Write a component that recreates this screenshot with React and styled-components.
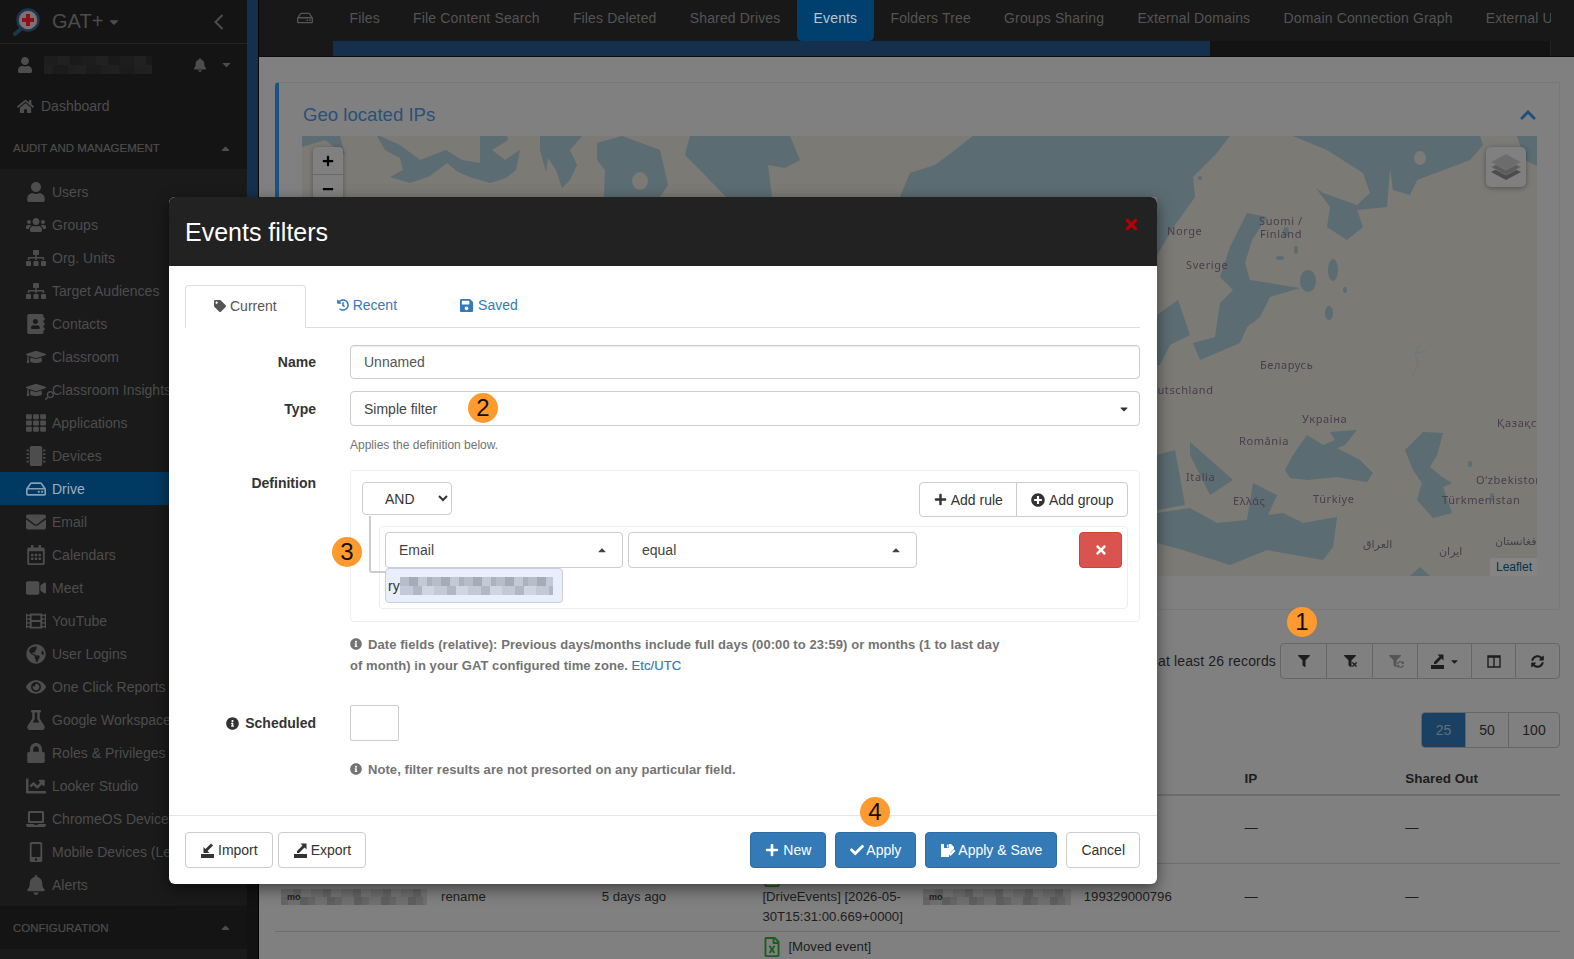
import React from "react";
import styled, { createGlobalStyle } from "styled-components";
import {
  FaUser, FaUsers, FaSitemap, FaAddressBook, FaGraduationCap, FaTh, FaMicrochip, FaRegHdd,
  FaEnvelope, FaRegCalendarAlt, FaVideo, FaFilm, FaGlobeAmericas, FaEye, FaFlask, FaLock,
  FaChartLine, FaLaptop, FaMobileAlt, FaBell, FaHome, FaCaretDown, FaCaretUp, FaChevronUp,
  FaTag, FaHistory, FaSave, FaPlus, FaPlusCircle, FaTimes, FaCheck, FaFilter, FaSyncAlt,
  FaInfoCircle, FaRegFileExcel, FaSearch, FaMinus,
} from "react-icons/fa";

const GlobalStyle = createGlobalStyle`
  html, body { margin: 0; padding: 0; height: 100%; overflow: hidden; }
  body { font-family: "Liberation Sans", Arial, sans-serif; font-size: 14px; color: #1d1d1d; background: #808080; }
  * { box-sizing: border-box; }
`;

const Page = styled.div`
  position: relative;
  display: flex;
  width: 1574px;
  height: 959px;
  overflow: hidden;
`;

/* sidebar */
const Sidebar = styled.aside`
  width: 247px;
  flex: none;
  background: #141414;
  color: #4d4d4d;
  overflow: hidden;
`;

const Brand = styled.div`
  display: flex;
  align-items: center;
  height: 44px;
  padding: 0 23px 0 13px;
  border-bottom: 1px solid #232323;
`;

const BrandName = styled.span`
  margin-left: 12px;
  font-size: 20px;
  color: #4c4c4c;
`;

const BrandCaret = styled(FaCaretDown)`
  margin-left: 4px;
  font-size: 14px;
`;

const BackArrow = styled.svg`
  margin-left: auto;
`;

const UserRow = styled.div`
  display: flex;
  align-items: center;
  height: 41px;
  padding: 0 14px 0 17px;
  font-size: 16px;
`;

const UserName = styled.div`
  width: 108px;
  height: 18px;
  margin-left: 11px;
  background:
    repeating-linear-gradient(90deg, #1d1d1d 0 14px, #212121 14px 26px, #1a1a1a 26px 38px) top / 100% 50% no-repeat,
    repeating-linear-gradient(90deg, #202020 0 9px, #1b1b1b 9px 24px, #1f1f1f 24px 33px) bottom / 100% 50% no-repeat;
`;

const UserBell = styled(FaBell)`
  margin-left: auto;
  font-size: 14px;
`;

const UserCaret = styled(FaCaretDown)`
  margin-left: 13px;
  font-size: 13px;
`;

const DashLink = styled.div`
  display: flex;
  align-items: center;
  height: 42px;
  padding-left: 17px;
  gap: 7px;
  font-size: 14px;
`;

const SectionHead = styled.div`
  display: flex;
  align-items: center;
  justify-content: space-between;
  height: ${(p) => p.$h}px;
  padding: 0 15px 0 13px;
  font-size: 11.5px;
  font-weight: 400;
  -webkit-text-stroke: 0.2px #4d4d4d;
`;

const NavList = styled.div`
  background: #1a1a1a;
  padding: 6px 0 5px;
`;

const NavItem = styled.div`
  display: flex;
  align-items: center;
  height: 33px;
  white-space: nowrap;
  background: ${(p) => (p.$active ? "#003a63" : "transparent")};
  color: ${(p) => (p.$active ? "#9db0bf" : "#4d4d4d")};
`;

const NavIcon = styled.span`
  position: relative;
  width: 52px;
  flex: none;
  display: flex;
  justify-content: center;
  padding-left: 20px;
  font-size: 20px;
  color: ${(p) => (p.$active ? "#84a0b3" : "#4d4d4d")};
`;

const MiniSearch = styled(FaSearch)`
  position: absolute;
  right: -2px;
  bottom: 0;
  font-size: 9px;
  transform: scaleX(-1);
`;

const SidebarEnd = styled.div`
  height: 12px;
  background: #1a1a1a;
`;

const VScroll = styled.div`
  width: 11px;
  flex: none;
  background: #121212;
`;

const VThumb = styled.div`
  height: 640px;
  background: #14304d;
`;

/* main column */
const Main = styled.main`
  flex: 1;
  min-width: 0;
  border-left: 1px solid #000;
  background: #808080;
`;

const TopBar = styled.div`
  height: 57px;
  background: #181818;
  border-bottom: 1px solid #0c0c0c;
`;

const TabStrip = styled.div`
  display: flex;
  align-items: stretch;
  width: 1292px;
  height: 41px;
  padding-left: 38px;
  overflow: hidden;
  white-space: nowrap;
  color: #545454;
`;

const TabIcon = styled.span`
  display: flex;
  align-items: center;
  flex: none;
  width: 36px;
  font-size: 16px;
  padding-bottom: 6px;
`;

const TopTab = styled.div`
  padding: 10px 16.6px 0;
  letter-spacing: 0.15px;
  border-radius: 0 0 5px 5px;
  background: ${(p) => (p.$active ? "#00406e" : "transparent")};
  color: ${(p) => (p.$active ? "#b9c6d0" : "#545454")};
`;

const HScroll = styled.div`
  width: 1218px;
  height: 15px;
  margin-left: 74px;
  background: #131313;
  border: 1px solid #222;
  border-width: 0 1px 0 0;
`;

const HThumb = styled.div`
  width: 877px;
  height: 100%;
  background: #14304d;
`;

const Content = styled.div`
  padding: 25px 14px 0 16px;
`;

const Panel = styled.section`
  height: 528px;
  border: 1px solid #787878;
  border-left: 4px solid #1f5284;
  border-radius: 4px 0 0 4px;
  padding: 0 23px 0 23px;
`;

const PanelHead = styled.div`
  display: flex;
  align-items: center;
  justify-content: space-between;
  height: 53px;
  padding: 10px 0 0 1px;
  font-size: 18.6px;
  color: #2a5078;
`;

const PanelChevron = styled(FaChevronUp)`
  font-size: 18px;
  margin-right: -1px;
  color: #1c4f80;
`;

const MapBox = styled.div`
  position: relative;
  width: 1235px;
  height: 440px;
  overflow: hidden;
  background: #7b7a75;
`;

const MapArt = styled.svg`
  display: block;
  filter: blur(0.4px);
`;

const ZoomBar = styled.div`
  position: absolute;
  left: 11px;
  top: 11px;
  width: 30px;
  background: #808080;
  border-radius: 4px;
  box-shadow: 0 1px 5px rgba(0, 0, 0, 0.3);
`;

const ZoomBtn = styled.div`
  height: 28px;
  display: flex;
  align-items: center;
  justify-content: center;
  color: #000;
  font-size: 12px;
  border-bottom: 1px solid #6a6a6a;
`;

const LayerBtn = styled.div`
  position: absolute;
  right: 11px;
  top: 11px;
  width: 40px;
  height: 40px;
  background: #808080;
  border-radius: 5px;
  box-shadow: 0 1px 5px rgba(0, 0, 0, 0.35);
  display: flex;
  align-items: center;
  justify-content: center;
`;

const Attribution = styled.div`
  position: absolute;
  right: 0;
  bottom: 0;
  width: 47px;
  height: 18px;
  padding: 2px 0 0 6px;
  background: #858483;
  color: #00344f;
  font-size: 12px;
`;

const ToolRow = styled.div`
  display: flex;
  justify-content: flex-end;
  align-items: center;
  gap: 4px;
  margin-top: 33px;
  letter-spacing: 0.15px;
`;

const BtnGroup = styled.div`
  display: flex;
  height: ${(p) => p.$h}px;
  border: 1px solid #666;
  border-radius: 4px;
  overflow: hidden;
`;

const GroupBtn = styled.div`
  position: relative;
  display: flex;
  align-items: center;
  justify-content: center;
  width: ${(p) => p.$w}px;
  gap: 4px;
  border-left: ${(p) => (p.$first ? "0" : "1px solid #666")};
  background: ${(p) => (p.$on ? "#1a4063" : "transparent")};
  color: ${(p) => p.$c || "#1d1d1d"};
  font-size: ${(p) => p.$fs || 14}px;
`;

const SubMark = styled.span`
  position: absolute;
  left: 24px;
  bottom: 10px;
  font-size: 7px;
  display: flex;
`;

const PagerRow = styled.div`
  display: flex;
  justify-content: flex-end;
  margin-top: 33px;
`;

const TableHead = styled.div`
  display: grid;
  grid-template-columns: 154px repeat(6, 160.7px) 1fr;
  padding-left: 12px;
  height: 48px;
  padding-top: 23px;
  border-bottom: 2px solid #6e6e6e;
  font-weight: 700;
  font-size: 13.5px;
`;

const TableRow = styled.div`
  display: grid;
  grid-template-columns: 154px repeat(6, 160.7px) 1fr;
  align-items: center;
  padding: 0 0 ${(p) => p.$pb || 0}px 12px;
  height: ${(p) => p.$h}px;
  border-bottom: 1px solid #6e6e6e;
  font-size: 13.2px;
  line-height: 20px;
`;

const Cell = styled.div`
  min-width: 0;
  white-space: nowrap;
`;

const EventLine = styled.div`
  display: flex;
  align-items: center;
  gap: 6px;
  margin-top: ${(p) => p.$mt || 0}px;
`;

const ExcelIcon = styled(FaRegFileExcel)`
  color: #1c5c1c;
  font-size: 20px;
`;

const OwnerChip = styled.div`
  display: flex;
  align-items: center;
  width: ${(p) => p.$w}px;
  height: 16px;
  margin-left: ${(p) => p.$ml || 0}px;
  padding-left: 6px;
  font-size: 9px;
  font-weight: 700;
  background:
    repeating-linear-gradient(90deg, #6d6d6d 0 12px, #646464 12px 20px, #747474 20px 30px) top / 100% 50% no-repeat,
    repeating-linear-gradient(90deg, #666 0 7px, #707070 7px 19px, #5f5f5f 19px 27px) bottom / 100% 50% no-repeat;
`;

/* modal */
const Modal = styled.div`
  position: absolute;
  left: 169px;
  top: 197px;
  width: 988px;
  height: 687px;
  background: #fff;
  border-radius: 6px;
  box-shadow: 0 5px 15px rgba(0, 0, 0, 0.5);
  color: #333;
`;

const ModalHead = styled.div`
  display: flex;
  align-items: center;
  justify-content: space-between;
  height: 69px;
  padding: 2px 17px 0 16px;
  background: #222;
  border-radius: 6px 6px 0 0;
  color: #fff;
  font-size: 25px;
`;

const CloseIcon = styled(FaTimes)`
  color: #b90000;
  font-size: 17px;
  margin: -16px 0 0;
`;

const ModalBody = styled.div`
  height: 550px;
  padding: 19px 17px 0 16px;
  border-bottom: 1px solid #e5e5e5;
`;

const Tabs = styled.div`
  display: flex;
  height: 43px;
  border-bottom: 1px solid #ddd;
`;

const Tab = styled.div`
  display: flex;
  align-items: center;
  gap: 4px;
  height: ${(p) => (p.$on ? 43 : 42)}px;
  padding: 0 ${(p) => (p.$on ? 28 : 30)}px 2px;
  color: ${(p) => (p.$on ? "#555" : "#337ab7")};
  background: ${(p) => (p.$on ? "#fff" : "transparent")};
  border: 1px solid ${(p) => (p.$on ? "#ddd" : "transparent")};
  border-bottom-color: ${(p) => (p.$on ? "#fff" : "transparent")};
  border-radius: 4px 4px 0 0;
`;

const FormRow = styled.div`
  display: grid;
  grid-template-columns: 131px 790px;
  column-gap: 34px;
  align-items: ${(p) => (p.$top ? "start" : "center")};
  margin-top: ${(p) => p.$mt}px;
`;

const Label = styled.label`
  display: flex;
  align-items: center;
  justify-content: flex-end;
  gap: 6px;
  font-weight: 700;
  padding-top: ${(p) => p.$pt || 0}px;
`;

const TextInput = styled.input`
  width: 100%;
  height: 34px;
  padding: 0 13px;
  font: inherit;
  color: #555;
  border: 1px solid #ccc;
  border-radius: 4px;
  box-shadow: inset 0 1px 1px rgba(0, 0, 0, 0.075);
  outline: none;
`;

const SelectBox = styled.div`
  display: flex;
  align-items: center;
  justify-content: space-between;
  width: ${(p) => p.$w || "100%"};
  height: ${(p) => p.$h || 35}px;
  padding: 0 14px 0 13px;
  border: 1px solid #ccc;
  border-radius: 4px;
  color: #444;
`;

const Caret = styled(FaCaretUp)`
  font-size: 12px;
  color: #444;
`;

const CaretDown = styled(FaCaretDown)`
  font-size: 12px;
  color: #333;
  margin-right: -5px;
`;

const Help = styled.div`
  margin: 12px 0 0 165px;
  font-size: 12px;
  line-height: 14px;
  color: #737373;
`;

const QueryBox = styled.div`
  width: 790px;
  height: 152px;
  padding: 11px 11px 0;
  border: 1px solid #eee;
  border-radius: 4px;
`;

const QueryHead = styled.div`
  display: flex;
  align-items: flex-start;
  justify-content: space-between;
  height: 44px;
`;

const AndSelect = styled.select`
  width: 90px;
  height: 33px;
  padding-left: 18px;
  font: inherit;
  color: #333;
  background: #fff;
  border: 1px solid #ccc;
  border-radius: 4px;
`;

const ButtonPair = styled.div`
  display: flex;
`;

const OutlineBtn = styled.div`
  display: flex;
  align-items: center;
  justify-content: center;
  gap: 4px;
  height: 35px;
  padding: 0 13.5px;
  color: #333;
  background: #fff;
  border: 1px solid #ccc;
  border-radius: ${(p) => p.$r || "4px"};
  margin-left: ${(p) => p.$ml || 0}px;
`;

const Rule = styled.div`
  position: relative;
  margin-left: 17px;
  height: 83px;
  padding: 5px 5px 0 5px;
  border: 1px solid #eee;
  border-radius: 4px;
  &::before {
    content: "";
    position: absolute;
    left: -11px;
    top: -11px;
    width: 17px;
    height: 55px;
    border-left: 2px solid #ccc;
    border-bottom: 2px solid #ccc;
    border-radius: 0 0 0 3px;
  }
`;

const RuleTop = styled.div`
  display: flex;
  gap: 5px;
`;

const DangerBtn = styled.div`
  display: flex;
  align-items: center;
  justify-content: center;
  width: 43px;
  height: 36px;
  margin-left: auto;
  background: #d9534f;
  border: 1px solid #d43f3a;
  border-radius: 4px;
  color: #fff;
  font-size: 14px;
`;

const Token = styled.div`
  position: relative;
  z-index: 1;
  display: flex;
  align-items: center;
  width: 178px;
  height: 35px;
  padding-left: 2px;
  background: #e8eefb;
  border: 1px solid #c9ced8;
  border-radius: 4px;
`;

const Blur = styled.div`
  width: 153px;
  height: 18px;
  background:
    repeating-linear-gradient(90deg, #b8bdca 0 9px, #a6abb8 9px 18px, #c4c9d6 18px 27px, #adb2bf 27px 32px) top / 100% 50% no-repeat,
    repeating-linear-gradient(90deg, #c4c9d6 0 13px, #b2b7c4 13px 22px, #d0d5e2 22px 34px) bottom / 100% 50% no-repeat;
`;

const Note = styled.div`
  display: flex;
  gap: 6px;
  margin: ${(p) => p.$mt}px 0 0 165px;
  width: 680px;
  font-size: 13px;
  font-weight: 700;
  letter-spacing: 0.07px;
  line-height: 21px;
  color: #737373;
  a { color: #337ab7; font-weight: 400; -webkit-text-stroke: 0.2px #337ab7; }
  svg { flex: none; margin-top: 4px; font-size: 12px; }
`;

const Check = styled.div`
  width: 49px;
  height: 36px;
  border: 1px solid #ccc;
  border-radius: 2px;
`;

const ModalFoot = styled.div`
  display: flex;
  justify-content: space-between;
  padding: 16px 17px 0 16px;
`;

const FootGroup = styled.div`
  display: flex;
  gap: ${(p) => p.$gap}px;
`;

const FootBtn = styled.div`
  display: flex;
  align-items: center;
  justify-content: center;
  gap: ${(p) => p.$gap ?? 3}px;
  height: 36px;
  padding: 0 14px;
  background: ${(p) => (p.$blue ? "#337ab7" : "#fff")};
  color: ${(p) => (p.$blue ? "#fff" : "#333")};
  border: 1px solid ${(p) => (p.$blue ? "#2e6da4" : "#ccc")};
  border-radius: 4px;
`;

const Badge = styled.div`
  position: absolute;
  left: ${(p) => p.$x - 15}px;
  top: ${(p) => p.$y - 15}px;
  z-index: 5;
  width: 30px;
  height: 30px;
  display: flex;
  align-items: center;
  justify-content: center;
  border-radius: 50%;
  background: #ff9a2e;
  color: #111;
  font-size: 24px;
`;

const navItems = [
  [FaUser, "Users"], [FaUsers, "Groups"], [FaSitemap, "Org. Units"], [FaSitemap, "Target Audiences"],
  [FaAddressBook, "Contacts"], [FaGraduationCap, "Classroom"], [FaGraduationCap, "Classroom Insights", true],
  [FaTh, "Applications"], [FaMicrochip, "Devices"], [FaRegHdd, "Drive"], [FaEnvelope, "Email"],
  [FaRegCalendarAlt, "Calendars"], [FaVideo, "Meet"], [FaFilm, "YouTube"], [FaGlobeAmericas, "User Logins"],
  [FaEye, "One Click Reports"], [FaFlask, "Google Workspace Status"], [FaLock, "Roles & Privileges"],
  [FaChartLine, "Looker Studio"], [FaLaptop, "ChromeOS Devices"], [FaMobileAlt, "Mobile Devices (Legacy)"],
  [FaBell, "Alerts"],
];

const topTabs = [
  "Files", "File Content Search", "Files Deleted", "Shared Drives", "Events", "Folders Tree",
  "Groups Sharing", "External Domains", "Domain Connection Graph", "External Users",
];

const water = [
  "M302 136H377L385 150L400 158L403 170L390 177L410 183L430 176L447 163L458 172L470 177L490 183L506 178L516 170L520 150L505 160L492 150L508 140L507 136H480L480 163L462 160L446 150L420 160L400 145L380 136Z",
  "M302 136H340L345 155L325 140L302 147Z",
  "M540 136H582L570 150L577 165L570 180L562 188L556 170L548 158L546 172L540 150Z",
  "M597 143L622 136L660 150L668 185L660 197H604L605 170L597 160Z",
  "M690 136H770L775 150L768 165L772 197H726L700 170L685 155Z",
  "M770 136L790 136L800 160L785 168L768 165Z",
  "M973 136H1230L1215 155L1193 177L1195 197H900L910 173L935 165L955 150Z",
  "M1157 197H1195L1175 225L1160 250L1157 255Z",
  "M1157 315L1178 300L1190 335L1170 345L1160 365L1157 365Z",
  "M1247 213L1267 217L1252 240L1245 263L1250 280L1300 288L1270 297L1260 317L1247 327L1240 343L1200 360L1193 343L1215 337L1220 303L1233 290L1220 277L1230 247Z",
  "M1293 136L1327 150L1363 173L1370 193L1357 205L1323 193L1316 188L1330 207L1327 227L1347 240L1363 227L1357 210L1387 207L1390 168L1393 190L1410 195L1417 180L1470 160L1483 145L1480 136Z",
  "M1517 136H1537V166L1525 160Z",
  "M1285 470L1293 455L1307 435L1323 445L1335 440L1330 432L1357 430L1345 445L1337 448L1360 460L1373 473L1367 482L1337 477L1307 480L1290 478Z",
  "M1405 450L1423 432L1443 433L1437 455L1430 467L1442 477L1452 483L1443 487L1452 513L1433 518L1417 500L1422 483L1413 470Z",
  "M1157 513L1190 508L1217 523L1247 520L1253 483L1277 495L1268 515L1283 513L1303 523L1337 517L1333 547L1323 560L1267 550L1230 565L1183 550L1157 543Z",
  "M1190 442L1233 480L1210 495L1190 455Z",
  "M1157 455L1175 450L1185 505L1157 510Z",
  "M1410 576L1420 567L1430 576Z",
];

const lakes = [
  [1308, 281, 8, 11], [1333, 270, 5, 11], [1329, 313, 4, 7], [1280, 258, 4, 2], [1286, 232, 3, 5],
  [1296, 250, 2, 4], [1345, 290, 2, 3], [1470, 464, 2, 3], [1492, 497, 2, 4], [1200, 178, 2, 2],
];

const mapLabels = [
  ["Norge", 1167, 235], ["Sverige", 1186, 269], ["Suomi /", 1259, 225], ["Finland", 1260, 238],
  ["Беларусь", 1260, 369], ["Deutschland", 1142, 394], ["Україна", 1302, 423], ["România", 1239, 445],
  ["Italia", 1186, 481], ["Ελλάς", 1233, 505], ["Türkiye", 1313, 503], ["Қазақстан", 1497, 427],
  ["O‘zbekiston", 1476, 484], ["Türkmenistan", 1442, 504], ["العراق", 1363, 548], ["ایران", 1439, 555],
  ["افغانستان", 1495, 545],
];

const TrayIcon = ({ up }) => (
  <svg width="15" height="15" viewBox="0 0 15 15" fill="currentColor">
    <path d="M1 11h13v4H1z" />
    <path d={up ? "M4 8L9.500 2.500L7.500 0.500H13.500V6.500L11.500 4.500L6 10H4Z" : "M11 0.500L5.500 6L3.500 4V10H9.500L7.500 8L13 2.500Z"} />
  </svg>
);

const SaveCheckIcon = () => (
  <svg width="16" height="15" viewBox="0 0 16 15" fill="#fff">
    <path d="M1 1h10l3 3v2L9 11v3H1z" />
    <path d="M4 1h5v4H4z" fill="#337ab7" />
    <path d="M7 1.500h1.500v3H7zM10.500 13L8 10.500l1.500-1.500 1 1 3.500-3.500 1.500 1.500z" />
  </svg>
);

const App = () => {
  return (
    <Page>
      <GlobalStyle />
      <Sidebar>
        <Brand>
          <svg width="27" height="28" viewBox="0 0 27 28">
            <path d="M9 20L2 26" stroke="#1e3550" strokeWidth="4" strokeLinecap="round" />
            <circle cx="15" cy="12" r="10.500" fill="#7c7272" stroke="#1e3550" strokeWidth="2.500" />
            <path d="M13 6h4v4h4v4h-4v4h-4v-4H9v-4h4z" fill="#8f0f1e" />
          </svg>
          <BrandName>GAT+</BrandName>
          <BrandCaret />
          <BackArrow width="10" height="16" viewBox="0 0 10 16" fill="none" stroke="#4d4d4d" strokeWidth="2">
            <path d="M8.500 1L1.500 8l7 7" />
          </BackArrow>
        </Brand>
        <UserRow>
          <FaUser />
          <UserName />
          <UserBell />
          <UserCaret />
        </UserRow>
        <DashLink>
          <FaHome size={17} />
          Dashboard
        </DashLink>
        <SectionHead $h={42}>
          AUDIT AND MANAGEMENT
          <FaCaretUp size={13} />
        </SectionHead>
        <NavList>
          {navItems.map(([Icon, label, insight]) => (
            <NavItem key={label} $active={label === "Drive"}>
              <NavIcon $active={label === "Drive"}>
                <Icon />
                {insight && <MiniSearch />}
              </NavIcon>
              {label}
            </NavItem>
          ))}
        </NavList>
        <SectionHead $h={43}>
          CONFIGURATION
          <FaCaretUp size={13} />
        </SectionHead>
        <SidebarEnd />
      </Sidebar>
      <VScroll>
        <VThumb />
      </VScroll>
      <Main>
        <TopBar>
          <TabStrip>
            <TabIcon>
              <FaRegHdd />
            </TabIcon>
            {topTabs.map((t) => (
              <TopTab key={t} $active={t === "Events"}>
                {t}
              </TopTab>
            ))}
          </TabStrip>
          <HScroll>
            <HThumb />
          </HScroll>
        </TopBar>
        <Content>
          <Panel>
            <PanelHead>
              Geo located IPs
              <PanelChevron />
            </PanelHead>
            <MapBox>
              <MapArt width="1235" height="440" viewBox="302 136 1235 440">
                {water.map((d) => (
                  <path key={d} d={d} fill="#5b6c72" />
                ))}
                {lakes.map(([cx, cy, rx, ry]) => (
                  <ellipse key={`${cx}-${cy}`} cx={cx} cy={cy} rx={rx} ry={ry} fill="#5b6c72" />
                ))}
                <ellipse cx="1420" cy="158" rx="6" ry="7" fill="#7b7a75" />
                <ellipse cx="640" cy="181" rx="8" ry="9" fill="#7b7a75" />
                <path d="M1420 345l-5 8 3 12-6 12M1416 353l10-2" fill="none" stroke="#667a80" strokeWidth="1" />
                {mapLabels.map(([t, x, y]) => (
                  <text key={t} x={x} y={y} fontFamily="'Noto Sans','DejaVu Sans',sans-serif" fontSize="11" letterSpacing="0.6" fill="#4a3d4c">
                    {t}
                  </text>
                ))}
              </MapArt>
              <ZoomBar>
                <ZoomBtn><FaPlus /></ZoomBtn>
                <ZoomBtn><FaMinus /></ZoomBtn>
              </ZoomBar>
              <LayerBtn>
                <svg width="32" height="30" viewBox="0 0 32 30">
                  <path d="M16 13L31 20 16 28 1 20Z" fill="#4c4c4c" />
                  <path d="M16 8L31 15 16 23 1 15Z" fill="#5c5c5c" stroke="#7c7c7c" strokeWidth="0.6" />
                  <path d="M16 2L31 10 16 18 1 10Z" fill="#6c6c6c" stroke="#7c7c7c" strokeWidth="0.6" />
                </svg>
              </LayerBtn>
              <Attribution>Leaflet</Attribution>
            </MapBox>
          </Panel>
          <ToolRow>
            at least 26 records
            <BtnGroup $h={36}>
              <GroupBtn $first $w={45} $fs={12}><FaFilter /></GroupBtn>
              <GroupBtn $w={46} $fs={12}>
                <FaFilter />
                <SubMark><FaTimes /></SubMark>
              </GroupBtn>
              <GroupBtn $w={45} $fs={12} $c="#555">
                <FaFilter />
                <SubMark><FaSyncAlt /></SubMark>
              </GroupBtn>
              <GroupBtn $w={54} $c="#1d1d1d">
                <TrayIcon up />
                <FaCaretDown size={11} />
              </GroupBtn>
              <GroupBtn $w={44}>
                <svg width="14" height="13" viewBox="0 0 14 13" fill="none" stroke="#1d1d1d" strokeWidth="1.400">
                  <path d="M1 1h12v11H1zM7 1v11M1 2h12" />
                </svg>
              </GroupBtn>
              <GroupBtn $w={44} $fs={13}><FaSyncAlt /></GroupBtn>
            </BtnGroup>
          </ToolRow>
          <PagerRow>
            <BtnGroup $h={36}>
              <GroupBtn $first $on $w={43} $c="#62707d">25</GroupBtn>
              <GroupBtn $w={43}>50</GroupBtn>
              <GroupBtn $w={51}>100</GroupBtn>
            </BtnGroup>
          </PagerRow>
          <TableHead>
            <Cell />
            <Cell />
            <Cell />
            <Cell />
            <Cell />
            <Cell />
            <Cell>IP</Cell>
            <Cell>Shared Out</Cell>
          </TableHead>
          <TableRow $h={68} $pb={3}>
            <Cell />
            <Cell />
            <Cell />
            <Cell />
            <Cell />
            <Cell />
            <Cell>—</Cell>
            <Cell>—</Cell>
          </TableRow>
          <TableRow $h={68} $pb={1}>
            <Cell><OwnerChip $w={146} $ml={-6}>mo</OwnerChip></Cell>
            <Cell>rename</Cell>
            <Cell>5 days ago</Cell>
            <Cell>
              <EventLine><ExcelIcon />[Moved event]</EventLine>
              <div>[DriveEvents] [2026-05-</div>
              <div>30T15:31:00.669+0000]</div>
            </Cell>
            <Cell><OwnerChip $w={148}>mo</OwnerChip></Cell>
            <Cell>199329000796</Cell>
            <Cell>—</Cell>
            <Cell>—</Cell>
          </TableRow>
          <TableRow $h={40}>
            <Cell />
            <Cell />
            <Cell />
            <Cell>
              <EventLine $mt={-10}><ExcelIcon />[Moved event]</EventLine>
            </Cell>
          </TableRow>
        </Content>
      </Main>

      <Modal>
        <ModalHead>
          Events filters
          <CloseIcon />
        </ModalHead>
        <ModalBody>
          <Tabs>
            <Tab $on><FaTag size={12} />Current</Tab>
            <Tab><FaHistory size={12} />Recent</Tab>
            <Tab><FaSave size={15} />Saved</Tab>
          </Tabs>
          <FormRow $mt={17}>
            <Label>Name</Label>
            <TextInput defaultValue="Unnamed" />
          </FormRow>
          <FormRow $mt={12}>
            <Label>Type</Label>
            <SelectBox>
              Simple filter
              <CaretDown />
            </SelectBox>
          </FormRow>
          <Help>Applies the definition below.</Help>
          <FormRow $mt={18} $top>
            <Label $pt={5}>Definition</Label>
            <QueryBox>
              <QueryHead>
                <AndSelect defaultValue="AND">
                  <option>AND</option>
                  <option>OR</option>
                </AndSelect>
                <ButtonPair>
                  <OutlineBtn $r="4px 0 0 4px"><FaPlus size={13} />Add rule</OutlineBtn>
                  <OutlineBtn $r="0 4px 4px 0" $ml={-1}><FaPlusCircle size={14} />Add group</OutlineBtn>
                </ButtonPair>
              </QueryHead>
              <Rule>
                <RuleTop>
                  <SelectBox $w="238px" $h={36}>Email<Caret /></SelectBox>
                  <SelectBox $w="289px" $h={36}>equal<Caret /></SelectBox>
                  <DangerBtn><FaTimes /></DangerBtn>
                </RuleTop>
                <Token>ry<Blur /></Token>
              </Rule>
            </QueryBox>
          </FormRow>
          <Note $mt={12}>
            <FaInfoCircle />
            <span>
              Date fields (relative): Previous days/months include full days (00:00 to 23:59) or months (1 to last day
            </span>
          </Note>
          <Note $mt={0}>
            <span>
              of month) in your GAT configured time zone. <a>Etc/UTC</a>
            </span>
          </Note>
          <FormRow $mt={29}>
            <Label><FaInfoCircle size={13} />Scheduled</Label>
            <Check />
          </FormRow>
          <Note $mt={18}>
            <FaInfoCircle />
            <span>Note, filter results are not presorted on any particular field.</span>
          </Note>
        </ModalBody>
        <ModalFoot>
          <FootGroup $gap={5}>
            <FootBtn><TrayIcon />Import</FootBtn>
            <FootBtn><TrayIcon up />Export</FootBtn>
          </FootGroup>
          <FootGroup $gap={9}>
            <FootBtn $blue $gap={4}><FaPlus size={14} />New</FootBtn>
            <FootBtn $blue $gap={2}><FaCheck size={14} />Apply</FootBtn>
            <FootBtn $blue $gap={2}><SaveCheckIcon />Apply &amp; Save</FootBtn>
            <FootBtn>Cancel</FootBtn>
          </FootGroup>
        </ModalFoot>
      </Modal>

      <Badge $x={1302} $y={622}>1</Badge>
      <Badge $x={483} $y={408}>2</Badge>
      <Badge $x={347} $y={552}>3</Badge>
      <Badge $x={875} $y={812}>4</Badge>
    </Page>
  );
};

export default App;
